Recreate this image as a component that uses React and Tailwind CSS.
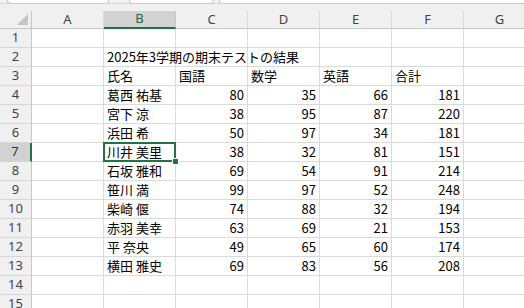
import React from "react";

const cols = ["A", "B", "C", "D", "E", "F", "G"];

const students = [
  ["葛西 祐基", 80, 35, 66, 181],
  ["宮下 涼", 38, 95, 87, 220],
  ["浜田 希", 50, 97, 34, 181],
  ["川井 美里", 38, 32, 81, 151],
  ["石坂 雅和", 69, 54, 91, 214],
  ["笹川 満", 99, 97, 52, 248],
  ["柴崎 偃", 74, 88, 32, 194],
  ["赤羽 美幸", 63, 69, 21, 153],
  ["平 奈央", 49, 65, 60, 174],
  ["横田 雅史", 69, 83, 56, 208],
];

// build sheet contents: rows 1..15, each with 7 cells
function buildRows() {
  const rows = [];
  rows.push([]);
  rows.push([null, "2025年3学期の期末テストの結果"]);
  rows.push([null, "氏名", "国語", "数学", "英語", "合計"]);
  students.forEach((s) => rows.push([null, ...s]));
  rows.push([]);
  rows.push([]);
  return rows;
}

function Cell({ value, active, overflow }) {
  const isNum = typeof value === "number";
  return (
    <div
      className={`relative w-[72px] h-[19px] shrink-0 border-r border-b border-[#dadada] text-[13px] leading-[18px] text-black whitespace-nowrap ${
        isNum ? "text-right pr-[3px]" : "pl-[3px]"
      } ${overflow || active ? "overflow-visible z-10" : "overflow-hidden"}`}
    >
      {value}
      {active && (
        <>
          <div className="absolute left-[-1px] top-[-1px] w-[73px] h-[20px] border-2 border-[#217346]" />
          <div className="absolute right-[-4px] bottom-[-4px] w-[7px] h-[7px] bg-[#217346] border border-white" />
        </>
      )}
    </div>
  );
}

export default function App() {
  const rows = buildRows();
  return (
    <div
      className="w-[524px] h-[308px] overflow-hidden bg-white"
      style={{ fontFamily: '"Noto Sans CJK JP", "Noto Sans", sans-serif' }}
    >
      {/* toolbar strip: name box, buttons, formula bar */}
      <div className="h-[11px] bg-[#f0f0f0]">
        <div className="h-[4px] flex items-start pl-[7px] border-b border-[#d6d6d6]">
          <div className="w-[102px] h-[4px] bg-white border border-t-0 border-[#c8c8c8] rounded-b-[5px]" />
          <div className="w-[85px] h-[4px] ml-[20px] bg-white border border-t-0 border-[#c8c8c8] rounded-b-[5px]" />
          <div className="flex-1 h-[4px] ml-[5px] bg-white border border-t-0 border-r-0 border-[#c8c8c8] rounded-bl-[5px]" />
        </div>
      </div>

      {/* column headers */}
      <div className="flex h-[18px] bg-[#f0f0f0]">
        <div className="w-[32px] shrink-0 border-r border-b border-[#c6c6c6] flex items-end justify-end pr-[3px] pb-[3px]">
          <svg width="11" height="11" viewBox="0 0 11 11">
            <polygon points="11,0 11,11 0,11" fill="#c4c4c4" />
          </svg>
        </div>
        {cols.map((c) => {
          const sel = c === "B";
          return (
            <div
              key={c}
              className={`w-[72px] shrink-0 flex items-center justify-center text-[13px] ${
                sel
                  ? "bg-[#d2d2d2] text-[#1b6a3e] border-b-2 border-[#217346] border-r border-r-[#c6c6c6]"
                  : "text-[#444] border-r border-[#dcdcdc] border-b border-b-[#c6c6c6]"
              }`}
              style={{ fontFamily: '"Noto Sans", "Open Sans", sans-serif' }}
            >
              {c}
            </div>
          );
        })}
      </div>

      {/* rows */}
      {rows.map((r, i) => {
        const n = i + 1;
        const sel = n === 7;
        return (
          <div key={n} className="flex">
            <div
              className={`w-[32px] h-[19px] shrink-0 flex items-center justify-center text-[13px] border-b border-[#d6d6d6] ${
                sel
                  ? "bg-[#d2d2d2] text-[#333] border-r-2 border-r-[#217346]"
                  : "bg-[#f0f0f0] text-[#444] border-r border-r-[#c6c6c6]"
              }`}
              style={{ fontFamily: '"Noto Sans", "Open Sans", sans-serif' }}
            >
              {n}
            </div>
            {cols.map((c, j) => (
              <Cell
                key={c}
                value={r[j]}
                active={sel && c === "B"}
                overflow={n === 2 && c === "B"}
              />
            ))}
          </div>
        );
      })}
    </div>
  );
}
